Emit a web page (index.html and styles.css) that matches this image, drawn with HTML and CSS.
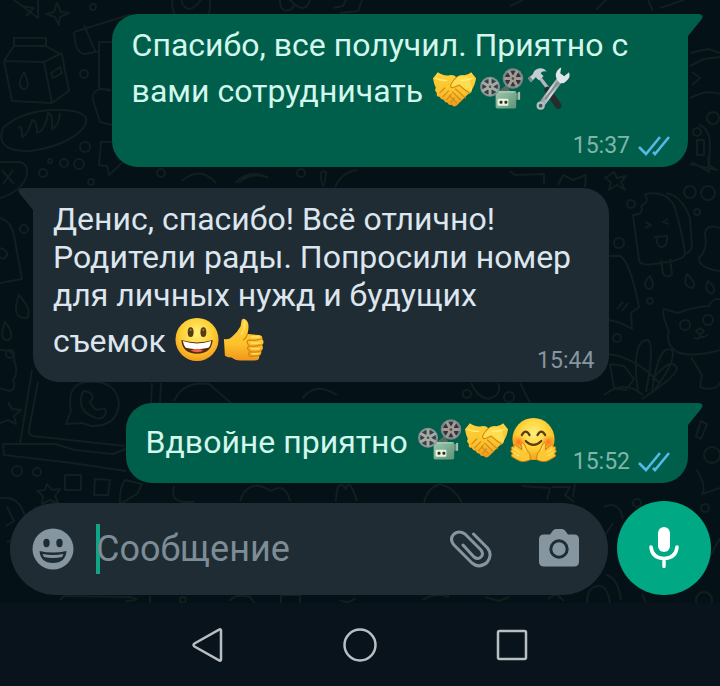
FILE: index.html
```html
<!DOCTYPE html>
<html lang="ru">
<head>
<meta charset="utf-8">
<meta name="viewport" content="width=device-width, initial-scale=1">
<title>Чат</title>
<link rel="stylesheet" href="styles.css">
</head>
<body>
<svg class="defs" aria-hidden="true">
  <defs>
    <linearGradient id="gold" x1="0" y1="0" x2="0" y2="1"><stop offset="0" stop-color="#fdd23a"/><stop offset=".6" stop-color="#fcc22c"/><stop offset="1" stop-color="#f0961c"/></linearGradient>
    <radialGradient id="face" cx=".5" cy=".36" r=".66"><stop offset="0" stop-color="#fff07a"/><stop offset=".55" stop-color="#fed034"/><stop offset="1" stop-color="#f09a16"/></radialGradient>
    <radialGradient id="cheek"><stop offset="0" stop-color="#ff6a22" stop-opacity=".95"/><stop offset="1" stop-color="#ff7a1a" stop-opacity="0"/></radialGradient>
    <linearGradient id="box" x1="0" y1="0" x2="1" y2="1"><stop offset="0" stop-color="#9dc9b0"/><stop offset="1" stop-color="#5d9275"/></linearGradient>
    <linearGradient id="steel" x1="0" y1="0" x2="1" y2="0"><stop offset="0" stop-color="#8b9295"/><stop offset=".5" stop-color="#d5dcde"/><stop offset="1" stop-color="#8f979b"/></linearGradient>
  </defs>
  <symbol id="handshake" viewBox="0 0 48 48">
    <path fill="url(#gold)" d="M2 13 7 7q5 4 12 3 4-1 7 2 4-3 8-2 4 0 7-3l5 6q-1 7-4 11 0 4-4 5l-12 12q-3 2-5-1-3 1-4-2-3 0-4-3-3 0-4-3-4 0-3-4-3-3-1-5Q3 19 2 13Z"/>
    <path fill="#ffdc50" d="m22 14 5-2q8-2 12 0l3 10q1 4-3 4L29 20q-5 3-8 2-3-2 1-8Z"/>
    <g fill="none" stroke="#d18a1a" stroke-width="1.2" stroke-linecap="round" stroke-linejoin="round">
      <path d="M26 12q-4 3-6 8 0 4 4 2l5-2q5 5 10 8M25 24l10 9M22 27l9 9M19 31l7 7"/>
      <path d="m9 28 5-5M12 32l6-6M16 35l5-6M20 38l4-5"/>
    </g>
    <path fill="none" stroke="#fff07e" stroke-width="1.3" stroke-linecap="round" d="M5 13q6 3 11 2M30 15q6 1 12-2"/>
  </symbol>
  <symbol id="projector" viewBox="0 0 48 48">
    <rect x="38" y="28" width="4" height="7" rx="1" fill="#638d78"/><path fill="#a8c2b4" d="M41 27h2v8h-2z"/>
    <path fill="#536a62" d="m17 29 12-9 4 6-13 6z"/>
    <rect x="18" y="26" width="21" height="18" rx="1.5" fill="url(#box)"/>
    <path stroke="#b3d4c0" fill="none" d="M19 27h18"/>
    <rect x="20" y="34" width="11" height="7" rx="1" fill="#edf3dc"/><rect x="22" y="36" width="3" height="3" rx="1" fill="#26332e"/><rect x="27" y="36" width="3" height="3" rx="1" fill="#26332e"/>
    <g transform="translate(12.3 21.7)"><circle r="10.2" fill="#86928f"/><circle r="8" fill="#35413f"/><path stroke="#a5aaa7" stroke-width="3" d="M0-9V9M-8-4.5 8 4.5M-8 4.5 8-4.5"/><circle r="3.5" fill="#a5aaa7"/><circle r="1.3" fill="#514d4d"/></g>
    <g transform="translate(35.7 13.3)"><circle r="10.5" fill="#7c8785"/><circle r="8" fill="#35333a"/><path stroke="#a09b97" stroke-width="3" d="M-9 0H9M-4.5-8 4.5 8M4.5-8-4.5 8"/><circle r="3.5" fill="#a09b97"/><circle r="1.3" fill="#574143"/></g>
  </symbol>
  <symbol id="tools" viewBox="0 0 48 48">
    <path stroke="#aeb8ba" stroke-width="3.5" d="m14 11 10 13"/>
    <path stroke="#252d2c" stroke-width="6.5" stroke-linecap="round" d="m23 25 11 16"/>
    <path fill="#c5ced0" d="M3 13 8 9q1-5 6-6 5-1 8 3-5-1-6 2l3 3-5 4-3-3-5 5Z"/><path fill="#78878a" d="m3 13 2-2 3 4-2 2Z"/>
    <path stroke="url(#steel)" stroke-width="6.5" stroke-linecap="round" d="m16 41 20-27"/>
    <path stroke="#818b8e" stroke-width="2" stroke-linecap="round" d="m21 34 12-16"/>
    <path fill="#e1e7e8" d="M33 15q-4-7 2-12l2-1-1 6 4 3 5-4q2 6-3 9-3 3-6 2Z"/>
    <circle cx="16" cy="41" r="4.2" fill="#b4bcbe"/><circle cx="16" cy="41" r="1.9" fill="#315a50"/>
  </symbol>
  <symbol id="grin" viewBox="0 0 48 48">
    <circle cx="23.5" cy="24.5" r="22" fill="url(#face)"/>
    <g fill="#543b12"><ellipse cx="17" cy="17" rx="3" ry="5"/><ellipse cx="30" cy="17" rx="3" ry="5"/></g>
    <g fill="#9b7845"><circle cx="17" cy="14.7" r="1.1"/><circle cx="30" cy="14.7" r="1.1"/></g>
    <path fill="#5a290f" d="M7.5 25q16 5 32 0-1 14-16 14T7.5 25Z"/>
    <path fill="#fff" d="M9 26q14.500 5 29 0-1 6-3 7-11.500 3-23 0-2-2-3-7Z"/>
    <path fill="#ec6251" d="M17 36q6.500-4 13 0-6 3-13 0Z"/>
  </symbol>
  <symbol id="thumb" viewBox="0 0 48 48">
    <path fill="url(#gold)" d="M3 24q5 1 8-2 6-5 9-11l1-6q1-3 4-1 5 3 2 15l12 1q4 1 3 4 3 3 0 6 2 4-1 6 1 4-2 5 1 5-5 5H20q-6 0-9-3-4 0-7-2Z"/>
    <path fill="none" stroke="#d98312" stroke-width="1.300" stroke-linecap="round" d="M41 24q-7 2-12 1-4 1-1 5M41 30q-7 2-12 1-4 2 0 5M41 36q-6 2-11 1-4 2 0 5l8-1M27 19q-1 4-4 6"/>
    <path fill="none" stroke="#ffe568" stroke-width="1.600" stroke-linecap="round" d="M24 6q1 7-3 13M31 22h8M31 28h9M31 34h8M32 39h6"/>
  </symbol>
  <symbol id="hug" viewBox="0 0 48 48">
    <circle cx="24" cy="23" r="21.500" fill="url(#face)"/>
    <circle cx="9" cy="26" r="7" fill="url(#cheek)"/><circle cx="39" cy="26" r="7" fill="url(#cheek)"/>
    <g fill="none" stroke="#5a3b12" stroke-width="2.200" stroke-linecap="round"><path d="M12 19q4-7 8 0M28 19q4-7 8 0"/><path d="M16 25q8 8 16 0"/></g>
    <path id="palm" fill="#fcc734" stroke="#cf7d13" d="M21 44q-8 4-14 0l-5-3q-2-2 1-3-4-3-1-4-2-4 2-3 0-4 3-1l5 4-1-6q2-3 4 1l2 5q4 3 4 10Z"/>
    <use href="#palm" transform="matrix(-1 0 0 1 48 0)"/>
    <path fill="none" stroke="#ffe15a" stroke-width="1.200" stroke-linecap="round" d="m5 33 5 4M4 37l5 3M43 33l-5 4M44 37l-5 3M14 30l2 5M34 30l-2 5"/>
  </symbol>
  <symbol id="read" viewBox="0 0 32 22">
    <path fill="none" stroke="#53b9e6" stroke-width="2.600" d="m1 12 7 7L22 2M15 17l2 2L31 2"/>
  </symbol>
  <symbol id="tail" viewBox="0 0 30 26">
    <path d="M0 0h26q6 1 2 6L15 22v4H0Z"/>
  </symbol>
</svg>

<main class="chat">
  <svg class="doodles" viewBox="0 0 720 603" preserveAspectRatio="xMidYMin slice" aria-hidden="true">
    <path d="M14 0 38 18 38 0M22 6l12 2-8 8M57 3l4 9 8 1-9 4-1 8-4-8-9-3 8-2ZM14 38h32v8H14Zm0 8L4 61l8 40 40 2 17-12-7-36-16-9M4 61l40 1 18-9M44 62l8 41M24 72q-8 14-1 17 9 0 1-17ZM51 73l9-6 2 6-9 5Z"/>
    <path d="M3 128q24-22 70-17 20 4 10 17-14 17-52 23-37 1-28-23ZM18 128q4-5 4 9 6-2 10-17 5 0 5 13 8-2 11-20 5 0 4 16 7-3 8-16M0 162h20q12 4 4 20-8 12-24 16M2 170l12 14M13 170 3 184"/>
    <path d="m74 32 55-17 12 10M74 32q1 22 11 22l15-3M84 25l12 28M112 42H99v46l12 3M111 90q-20-4-18 10l7 22 12 3M100 142h12M101 143l-2 22 8 1 2 9 13-12M172 0q0 25 20 25T210 0M181 0q6 18 20 0M280 0q0 13 10 10 8-5 0-10 15 16 20 0M333 8l10-2 3-6M340 13l18-2 4-11M510 6l13-6M596 10l10-10M660 8l24-8M648 0l5 11"/>
    <path d="M690 53l18-4 12 4M690 66l14-7 16-2M690 98q17-9 30-4M692 72l8 6-8 7M692 162l17 10-1-15M699 125q10 3 11 18l-1 22 8 5-27-6M697 140h7v15h-7ZM182 181q18-16 34 2M235 183q15-15 33-5M268 177q-20-5-29 6M323 186q-6-18 3-14-1 14-3 14ZM335 187q7-15 22-17M510 171l5 4 29-1v10M558 185l5-10 10 5 13-5-1 12M614 172l3 6 9-2-5 6 4 8-8-5-8 5 2-8-6-4Z"/>
    <path d="M0 218q12 4 14 18l8 43-22 4M0 248q8 2 7 7-3 6-7 2M19 295q14 16 8 23-17 1-8-23ZM5 322q10 12 4 18-11 1-4-18ZM0 350q16 0 14 10 5 13-1 20 4 10-4 11l-9-3"/>
    <path d="M645 194q20-4 29 11 9 30 11 49-1 6-24 9-21 4-22-3l-6-45q12-1 8-9 9-4 4-12ZM666 193q16 3 24 25l2 29q-3 7-8 6M645 222l6 3-6 3M668 219l-5 3 6 2M654 237l13-1q1 11-6 11-5-1-4-10M661 260l2 14q5 5 9 0l-2-15M608 256h12q10 5 19 51l-8 6 1 16q-13-8-24-9M617 309l6-7M622 311l6-8"/>
    <path d="M650 276q-9 8-2 13 9 0 2-13ZM687 274q-5 11 4 14 8-2-4-14ZM708 281q-5 10 4 13 6-5-4-13ZM720 228q-15-5-15 7 3 14-6 23-1 10 21 13M669 331q-8-17-5-22l14 4q15-6 31-7 3-8 11-7M669 331q-4 13 8 21 15 6 43-2M691 357l11 18-2 12q15 5 20-4M696 331l4-3 4 3-4 4ZM694 337q5 4 6-1 4 3 8-2M608 354q30 4 52 30M610 364l14 2 10 13-8 11-12-2ZM638 393q-7-54 10-53 7 6-2 52M652 393q6-50 20-43 5 10-17 39M652 380q19-24 25-12 0 8-35 31"/>
    <path d="M32 370 20 444M38 382l-9 48q-1 5 4 6l92 10M3 444h52l20 6 38 4 15-6M3 444l1 11 68 8 54 8M66 424l5-13q-5-27 16-29 31-2 32 23-3 22-28 21l-9-3ZM83 391q9 0 10 7l-3 4q3 7 8 8 7-4 8 2-2 8-10 6-21-7-13-27ZM65 475h16v15H65ZM95 479l15 1-2 15H94Z"/>
    <path d="m47 484 5 6 8-1-5 7 4 8-9-4-8 4 1-8-6-5 8-1ZM8 402l4 7 9 1-7 6 2 8-8-4-8 3M125 480l17 4-5 10-17 10q-1-15 5-24ZM152 383l-1 20M161 383l-1 20M174 401q9-20 35-17l22 19M302 399q12-18 35-4M471 383q6 14 17 16 15-4 10-16M520 383l10 20M604 395q20-16 39 0M701 421l6 3-6 15-5-3ZM697 470q10 17 5 24l18-6M174 486q-4 15 10 16h10M240 501q8-24 31-10 14-9 19 10M336 501q1-25 10-12 3-13 11 12M424 503q3-15 16-19 15 4 22 19M522 486l28 2-3 12M552 487h18l-5 8 9 7"/>
    <path d="M0 498q22-3 26 24 0 15-19 20M7 507l7 14-8 5M575 484l-2 13M604 507q15-7 19 12M613 523l-8 12M708 560l12-22M606 575q12 3 15 25M60 600l4-4 66 1q14 3-4 4M150 596v10M230 601q4-8 20-4l6 8M281 603v-8h19v8M340 600q8 5 15-2M423 600q12-8 26-3M485 597l14 4 10-4M548 599l8-5 8 7M587 603q0-15 10-17t13 17M642 594l4 9"/>
    <circle cx="84" cy="74" r="4"/><circle cx="85" cy="147" r="5"/><circle cx="64" cy="163" r="4"/><circle cx="79" cy="164" r="5"/><circle cx="43" cy="173" r="4"/><circle cx="91" cy="182" r="3"/><circle cx="50" cy="161" r="2"/><circle cx="93" cy="7" r="3"/><circle cx="161" cy="173" r="4"/><circle cx="301" cy="173" r="4"/><circle cx="24" cy="229" r="4"/><circle cx="10" cy="354" r="4"/><circle cx="17" cy="471" r="5"/><circle cx="37" cy="472" r="4"/><circle cx="690" cy="192" r="6"/><circle cx="708" cy="193" r="7"/><circle cx="697" cy="212" r="3"/><circle cx="631" cy="204" r="4"/><circle cx="619" cy="243" r="5"/><circle cx="650" cy="301" r="3"/><circle cx="617" cy="338" r="4"/><circle cx="685" cy="325" r="5"/><circle cx="708" cy="320" r="5"/><circle cx="713" cy="118" r="6"/><circle cx="697" cy="132" r="4"/><circle cx="712" cy="455" r="8"/><circle cx="467" cy="394" r="4"/><circle cx="509" cy="397" r="5"/><circle cx="637" cy="503" r="4"/><circle cx="705" cy="508" r="4"/><circle cx="183" cy="600" r="3"/><circle cx="704" cy="600" r="8"/>
  </svg>

  <section class="messages" aria-label="Сообщения">
    <article class="bubble bubble--out">
      <svg class="tail" aria-hidden="true"><use href="#tail"/></svg>
      <p class="text">Спасибо, все получил. Приятно с вами сотрудничать&nbsp;<svg class="emoji" role="img" aria-label="🤝"><use href="#handshake"/></svg><svg class="emoji" role="img" aria-label="📽"><use href="#projector"/></svg><svg class="emoji" role="img" aria-label="🛠"><use href="#tools"/></svg></p>
      <footer class="meta"><time>15:37</time><svg class="read" role="img" aria-label="Прочитано"><use href="#read"/></svg></footer>
    </article>

    <article class="bubble bubble--in">
      <svg class="tail" aria-hidden="true"><use href="#tail"/></svg>
      <p class="text">Денис, спасибо! Всё отлично! Родители рады. Попросили номер для личных нужд и будущих <span class="ending">съемок <svg class="emoji" role="img" aria-label="😃"><use href="#grin"/></svg><svg class="emoji" role="img" aria-label="👍"><use href="#thumb"/></svg></span></p>
      <footer class="meta"><time>15:44</time></footer>
    </article>

    <article class="bubble bubble--out bubble--short">
      <svg class="tail" aria-hidden="true"><use href="#tail"/></svg>
      <p class="text">Вдвойне приятно&nbsp;<svg class="emoji" role="img" aria-label="📽"><use href="#projector"/></svg><svg class="emoji" role="img" aria-label="🤝"><use href="#handshake"/></svg><svg class="emoji" role="img" aria-label="🤗"><use href="#hug"/></svg></p>
      <footer class="meta"><time>15:52</time><svg class="read" role="img" aria-label="Прочитано"><use href="#read"/></svg></footer>
    </article>
  </section>

  <form class="composer">
    <div class="field">
      <button class="tool" type="button" aria-label="Эмодзи">
        <svg width="42" height="42" viewBox="0 0 42 42"><circle cx="21" cy="21" r="20.500" fill="#8696a0"/><g fill="#1f2c34"><ellipse cx="14.500" cy="15" rx="3.200" ry="4.200"/><ellipse cx="27.500" cy="15" rx="3.200" ry="4.200"/><path d="M7.500 23q13.500 3 27 0-1 12-13.500 12T7.500 23Z"/></g><path fill="#8696a0" d="M10.500 26q10.500 2 21 0l-1.500 3q-9 2-18 0Z"/></svg>
      </button>
      <span class="caret" aria-hidden="true"></span>
      <input class="input" type="text" placeholder="Сообщение" aria-label="Сообщение">
      <button class="tool" type="button" aria-label="Прикрепить">
        <svg width="42" height="42" viewBox="0 0 42 42"><path fill="none" stroke="#8696a0" stroke-width="3" stroke-linecap="round" stroke-linejoin="round" d="M23.500 6 37.500 20Q43 27 37 34.500 29 41 22 35L4 17Q-1 11 4 6 9 2 15 6L31 22Q34 26 31 29 28 32 24 29L13 17"/></svg>
      </button>
      <button class="tool" type="button" aria-label="Камера">
        <svg width="42" height="42" viewBox="0 0 42 42"><path fill="#8696a0" d="M6 6.500h6l3-4q1-1.500 3-1.500h6q2 0 3 1.500l3 4h6q5 0 5 5v22q0 5-5 5H6q-5 0-5-5v-22q0-5 5-5Z"/><circle cx="21" cy="21" r="8.200" fill="none" stroke="#1f2c34" stroke-width="3"/></svg>
      </button>
    </div>
    <button class="mic" type="button" aria-label="Голосовое сообщение">
      <svg width="42" height="44" viewBox="0 0 42 44"><rect x="15" y="1" width="12" height="25" rx="6" fill="#fff"/><path fill="none" stroke="#fff" stroke-width="3.500" stroke-linecap="round" d="M8 21q1 11 13 11.500Q33 32 34 21M21 33v7.500"/></svg>
    </button>
  </form>
</main>

<nav class="system" aria-label="Системная навигация">
  <button type="button" aria-label="Назад"><svg width="36" height="36" viewBox="0 0 36 36"><path d="M31 3.500v29q0 1.500-1.500 1L4.500 19.500q-2-1.500 0-3l25-14q1.500-.5 1.500 1Z"/></svg></button>
  <button type="button" aria-label="Домой"><svg width="36" height="36" viewBox="0 0 36 36"><circle cx="18" cy="18" r="15.500"/></svg></button>
  <button type="button" aria-label="Недавние"><svg width="36" height="36" viewBox="0 0 36 36"><rect x="4" y="4" width="28" height="28" rx="1.500"/></svg></button>
</nav>
</body>
</html>
```
FILE: styles.css
```css
* { box-sizing: border-box; }

body {
  margin: 0;
  min-height: 100vh;
  display: flex;
  flex-direction: column;
  background: #08131b;
  font-family: Roboto, "Liberation Sans", sans-serif;
}

button {
  padding: 0;
  border: 0;
  background: none;
  cursor: pointer;
}

button svg { display: block; }

.defs {
  position: absolute;
  width: 0;
  height: 0;
}

.chat {
  position: relative;
  display: flex;
  flex-direction: column;
  gap: 18px;
  padding: 14px 9px 8px 10px;
  background: #041116;
  overflow: hidden;
}

.doodles {
  position: absolute;
  inset: 0;
  width: 100%;
  height: 100%;
  fill: none;
  stroke: #121f20;
  stroke-width: 2;
  stroke-linejoin: round;
}

.messages {
  position: relative;
  display: flex;
  flex-direction: column;
  gap: 21px;
  padding: 0 23px;
}

.bubble {
  position: relative;
  display: flex;
  flex-direction: column;
  width: 88%;
  padding: 12px 18px 7px 20px;
  border-radius: 26px;
}

.bubble--out {
  align-self: flex-end;
  background: #005f4b;
  color: #d3f7ec;
  fill: #005f4b;
  border-top-right-radius: 0;
}

.bubble--in {
  align-self: flex-start;
  background: #1f2c34;
  color: #dde6ee;
  fill: #1f2c34;
  border-top-left-radius: 0;
}

.bubble--short {
  flex-direction: row;
  align-items: flex-end;
  gap: 16px;
  width: auto;
}

.tail {
  position: absolute;
  top: 0;
  right: -15px;
  width: 30px;
  height: 26px;
}

.bubble--in .tail {
  right: auto;
  left: -15px;
  transform: scaleX(-1);
}

.text {
  margin: 0;
  font-size: 32px;
  line-height: 38px;
}

.ending { white-space: nowrap; }

.bubble--short .text { padding-bottom: 11px; }

.emoji {
  width: 47px;
  height: 50px;
  vertical-align: -12px;
}

.meta {
  display: flex;
  align-items: center;
  align-self: flex-end;
  gap: 8px;
  margin-top: 18px;
  font-size: 23px;
  line-height: 28px;
  color: #80b5a8;
}

.bubble--in .meta {
  margin-top: -17px;
  margin-right: -3px;
  color: #8696a0;
}

.bubble--short .meta { margin-top: 0; }

.read {
  width: 32px;
  height: 22px;
}

.composer {
  position: relative;
  display: flex;
  align-items: flex-end;
  gap: 9px;
}

.field {
  flex: 1;
  display: flex;
  align-items: center;
  min-width: 0;
  height: 92px;
  padding: 0 28px 0 22px;
  border-radius: 46px;
  background: #1f2c34;
}

.caret {
  flex: none;
  width: 4px;
  height: 50px;
  margin: 0 -4px 0 22px;
  background: #10a683;
}

.input {
  flex: 1;
  min-width: 0;
  padding: 0;
  border: 0;
  outline: 0;
  background: none;
  color: #dde6ee;
  font: 36px/44px Roboto, "Liberation Sans", sans-serif;
}

.input::placeholder {
  color: #7d8c96;
  opacity: 1;
}

.tool + .tool { margin-left: 46px; }

.mic {
  flex: none;
  display: grid;
  place-items: center;
  width: 94px;
  height: 94px;
  border-radius: 50%;
  background: #00a884;
}

.system {
  flex: 1;
  display: flex;
  justify-content: center;
  align-items: center;
  gap: 116px;
  min-height: 82px;
}

.system svg {
  fill: none;
  stroke: #b9bec2;
  stroke-width: 2.500;
}
```
